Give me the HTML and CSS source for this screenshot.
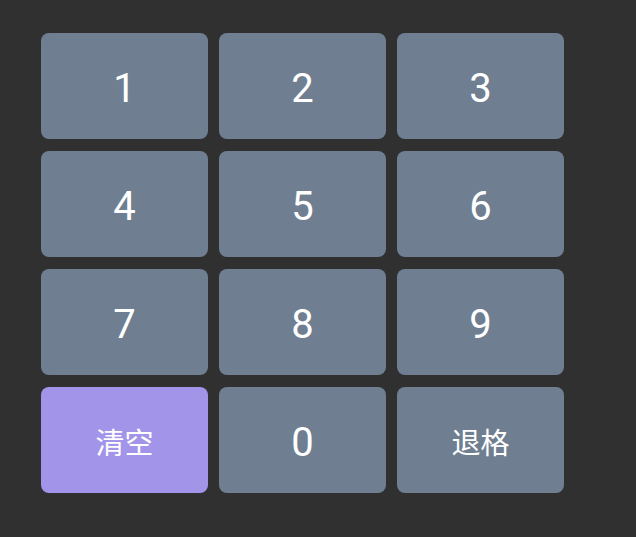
FILE: index.html
```html
<!DOCTYPE html>
<html lang="zh">
<head>
<meta charset="utf-8">
<link rel="stylesheet" href="styles.css">
</head>
<body>
<div class="pad">
  <div class="key">1</div>
  <div class="key">2</div>
  <div class="key">3</div>
  <div class="key">4</div>
  <div class="key">5</div>
  <div class="key">6</div>
  <div class="key">7</div>
  <div class="key">8</div>
  <div class="key">9</div>
  <div class="key key-clear cjk">清空</div>
  <div class="key">0</div>
  <div class="key cjk">退格</div>
</div>
</body>
</html>
```
FILE: styles.css
```css
html, body {
  margin: 0;
  padding: 0;
  background: #303030;
  height: 100%;
}
body {
  padding: 33px 0 0 41px;
  box-sizing: border-box;
}
.pad {
  display: grid;
  grid-template-columns: repeat(3, 167px);
  grid-auto-rows: 106px;
  column-gap: 11px;
  row-gap: 12px;
}
.key {
  background: #6f7f91;
  border-radius: 8px;
  display: flex;
  align-items: center;
  justify-content: center;
  color: #ffffff;
  font-family: Roboto, "Noto Sans CJK SC", sans-serif;
  font-size: 40px;
  padding-top: 4px;
  box-sizing: border-box;
}
.cjk {
  font-size: 29px;
  font-family: "Noto Sans CJK SC", sans-serif;
  padding-top: 2px;
}
.key-clear {
  background: #a294e8;
}
```
